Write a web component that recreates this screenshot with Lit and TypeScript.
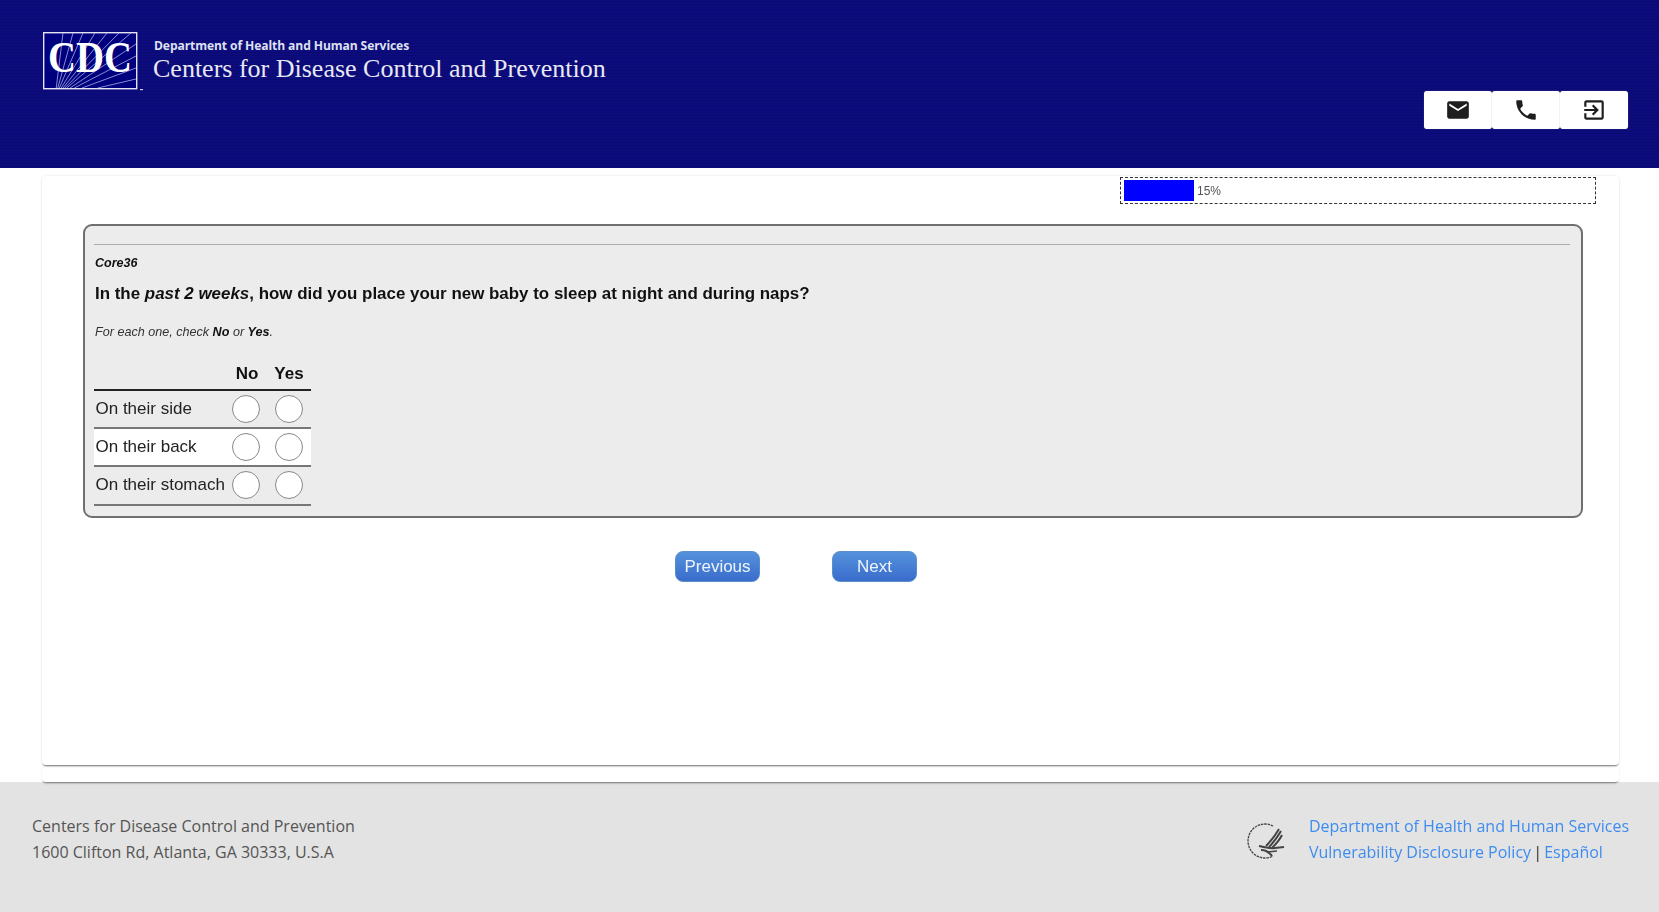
import { LitElement, html, css, svg } from "lit";
import { customElement } from "lit/decorators.js";

const rayTargets = [
  [20, 1], [30, 1], [40, 1], [52, 1], [64, 1], [76, 1], [88, 1],
  [93, 12], [93, 24], [93, 36], [93, 47],
];
const ox = 12;
const oy = 66;
const rays = rayTargets.map(([x, y]) => {
  const t = (oy - 56) / (oy - y);
  return [ox + (x - ox) * t, 56, x, y];
});

const rows = ["On their side", "On their back", "On their stomach"];

@customElement("app-root")
export class AppRoot extends LitElement {
  static styles = css`
    :host { display: block; height: 912px; overflow: hidden; background: #fff; font-family: "Liberation Sans", Arial, sans-serif; }
    .page { display: flex; flex-direction: column; height: 912px; filter: blur(0.35px); }
    header {
      height: 168px; flex: none; box-sizing: border-box;
      display: flex; justify-content: space-between; padding: 32px 31px 39px 43px;
      background: repeating-linear-gradient(180deg, #0c0c80 0 1px, #0a0a72 1px 2px, #0c0c7c 2px 3px);
    }
    .brand { display: flex; align-items: flex-start; }
    .logo { display: block; width: 102px; height: 60px; flex: none; }
    .brand-text { margin-left: 8px; padding-top: 6px; }
    .dept { font: bold 12.1px/16px "Open Sans", sans-serif; margin-left: 1px; letter-spacing: -0.1px; color: #dfe0f0; }
    .cdc { font: 26px/30px "Liberation Serif", serif; color: #e8e8f4; white-space: nowrap; }
    .actions { display: flex; align-self: flex-end; }
    .actions button {
      width: 68px; height: 38px; padding: 0; border: none; background: #fff; border-radius: 3px;
      display: flex; align-items: center; justify-content: center; margin: 0;
      box-shadow: 0 0 1px #888;
    }
    .actions svg { width: 26px; height: 26px; fill: #1e1e1e; display: block; }
    main { flex: 1; display: flex; flex-direction: column; margin: 8px 40px 0 42px; min-height: 0; position: relative; z-index: 1; }
    .card {
      height: 589px; box-sizing: border-box; background: #fff; border-radius: 4px;
      box-shadow: 0 2px 2px -1px rgba(0,0,0,.55), 0 0 3px rgba(0,0,0,.1);
      padding: 1px 23px 0 41px; position: relative; z-index: 1;
    }
    .progress-row { display: flex; justify-content: flex-end; }
    .progress {
      width: 476px; height: 27px; box-sizing: border-box; border: 1px dashed #333;
      display: flex; align-items: center; padding: 0 3px; font-size: 12px; color: #555;
    }
    .fill { width: 70px; height: 21px; background: #0000ff; margin-right: 3px; }
    .panel {
      margin: 20px 13px 0 0; height: 294px; box-sizing: border-box; background: #ececec;
      border: 2px solid #6f6f6f; border-radius: 9px; padding: 18px 11px 0 9px; color: #111;
    }
    .panel hr { height: 1px; border: 0; background: #aaa; margin: 0; }
    .code { font: italic bold 12.5px/14px "Liberation Sans", sans-serif; margin: 11px 0 0 1px; }
    .q { font: bold 16.93px/22px "Liberation Sans", sans-serif; margin: 13px 0 0 1px; }
    .hint { font: italic 12.6px/14px "Liberation Sans", sans-serif; margin: 20px 0 0 1px; color: #333; }
    .hint b { color: #111; }
    .grid { width: 217px; margin-top: 25px; }
    .ghead { display: flex; height: 25px; border-bottom: 2px solid #222; font-weight: bold; font-size: 17px; line-height: 20px; }
    .ghead span { width: 42px; text-align: center; }
    .ghead span.first { margin-left: 132px; }
    .grow { display: flex; align-items: center; height: 36.2px; border-bottom: 2px solid #777; font-size: 17px; color: #222; }
    .grow.alt { background: #fff; }
    .label { width: 131px; padding-left: 1.5px; box-sizing: border-box; white-space: nowrap; }
    .cell { width: 42px; display: flex; justify-content: center; }
    .cell + .cell { margin-left: 0.5px; }
    .radio { width: 28px; height: 28px; box-sizing: border-box; border-radius: 50%; background: #fff; border: 1px solid #888; }
    .nav { display: flex; gap: 72px; margin: 33px 0 0 592px; }
    .nav button {
      width: 85px; height: 31px; box-sizing: border-box; padding: 0; font: 17px "Liberation Sans", sans-serif; color: #eef4fc;
      background: linear-gradient(180deg, #5492dc, #3a6ccc); border: 1px solid #5b8fc8; border-radius: 8px;
    }
    .sliver { height: 17px; flex: none; background: #fff; border-radius: 0 0 4px 4px; box-shadow: 0 2px 2px -1px rgba(0,0,0,.5); }
    footer {
      height: 130px; flex: none; box-sizing: border-box; background: #e3e3e3; display: flex; justify-content: space-between;
      padding: 32px 30px 0 32px; font: 16px/25.6px "Open Sans", sans-serif; color: #555;
    }
    .right { display: flex; }
    .hhs { width: 42px; height: 42px; margin: 7px 21px 0 0; display: block; }
    .links { color: #3f8cf0; white-space: nowrap; }
    .links i { font-style: normal; color: #555; margin: 0 -2px; font-weight: 600; }
  `;

  render() {
    return html`<div class="page">
      <header>
        <div class="brand">
          <svg class="logo" viewBox="0 0 102 60" role="img" aria-label="CDC">
            <rect x="0.7" y="0.7" width="93" height="56" fill="#00007f" stroke="#e4e4f2" stroke-width="1.4"></rect>
            ${rays.map(([a, b, c, d]) => svg`<line x1=${a} y1=${b} x2=${c} y2=${d} stroke="#aab0e0" stroke-width=".8"></line>`)}
            <text x="47" y="40" text-anchor="middle" font-family="Liberation Serif" font-weight="bold" font-size="45" fill="#fff" textLength="84" lengthAdjust="spacingAndGlyphs">CDC</text>
            <rect x="97" y="57" width="3" height="1.2" fill="#ccc"></rect>
          </svg>
          <div class="brand-text">
            <div class="dept">Department of Health and Human Services</div>
            <div class="cdc">Centers for Disease Control and Prevention</div>
          </div>
        </div>
        <div class="actions">
          <button aria-label="Email"><svg viewBox="0 0 24 24"><path d="M20 4H4c-1.1 0-1.99.9-1.99 2L2 18c0 1.1.9 2 2 2h16c1.1 0 2-.9 2-2V6c0-1.1-.9-2-2-2zm0 4l-8 5-8-5V6l8 5 8-5v2z"></path></svg></button>
          <button aria-label="Phone"><svg viewBox="0 0 24 24"><path d="M6.62 10.79c1.44 2.83 3.76 5.14 6.59 6.59l2.2-2.2c.27-.27.67-.36 1.02-.24 1.12.37 2.33.57 3.57.57.55 0 1 .45 1 1V20c0 .55-.45 1-1 1-9.39 0-17-7.61-17-17 0-.55.45-1 1-1h3.5c.55 0 1 .45 1 1 0 1.25.2 2.45.57 3.57.11.35.03.74-.25 1.02l-2.2 2.2z"></path></svg></button>
          <button aria-label="Exit"><svg viewBox="0 0 24 24"><path d="M10.09 15.59L11.5 17l5-5-5-5-1.41 1.41L12.67 11H3v2h9.67l-2.58 2.59zM19 3H5c-1.11 0-2 .9-2 2v4h2V5h14v14H5v-4H3v4c0 1.1.89 2 2 2h14c1.1 0 2-.9 2-2V5c0-1.1-.9-2-2-2z"></path></svg></button>
        </div>
      </header>
      <main>
        <div class="card">
          <div class="progress-row"><div class="progress"><div class="fill"></div>15%</div></div>
          <section class="panel">
            <hr />
            <div class="code">Core36</div>
            <div class="q">In the <em>past 2 weeks</em>, how did you place your new baby to sleep at night and during naps?</div>
            <div class="hint">For each one, check <b>No</b> or <b>Yes</b>.</div>
            <div class="grid">
              <div class="ghead"><span class="first">No</span><span>Yes</span></div>
              ${rows.map((r, i) => html`<div class="grow ${i === 1 ? "alt" : ""}">
                <div class="label">${r}</div>
                <div class="cell"><div class="radio"></div></div>
                <div class="cell"><div class="radio"></div></div>
              </div>`)}
            </div>
          </section>
          <div class="nav"><button>Previous</button><button>Next</button></div>
        </div>
        <div class="sliver"></div>
      </main>
      <footer>
        <div>Centers for Disease Control and Prevention<br />1600 Clifton Rd, Atlanta, GA 30333, U.S.A</div>
        <div class="right">
          <svg class="hhs" viewBox="0 0 42 42" fill="none" stroke="#444">
            <path d="M27 5 A17 17 0 1 0 27 35" stroke-width="1.3" stroke-dasharray="2.5 .8"></path>
            <path d="M33 8 C30 13 26 19 20 25" stroke-width="2"></path>
            <path d="M35 10 C32 15 29 20 23 26" stroke-width="2"></path>
            <path d="M36 14 C34 18 31 22 26 27" stroke-width="2"></path>
            <path d="M13 25 C18 26 24 28 29 27 L38 26" stroke-width="2"></path>
            <path d="M15 29 C19 29 23 31 26 35" stroke-width="2"></path>
            <path d="M21 31 L31 30" stroke-width="1.5"></path>
          </svg>
          <div class="links">Department of Health and Human Services<br />Vulnerability Disclosure Policy <i>|</i> Español</div>
        </div>
      </footer>
    </div>`;
  }
}
